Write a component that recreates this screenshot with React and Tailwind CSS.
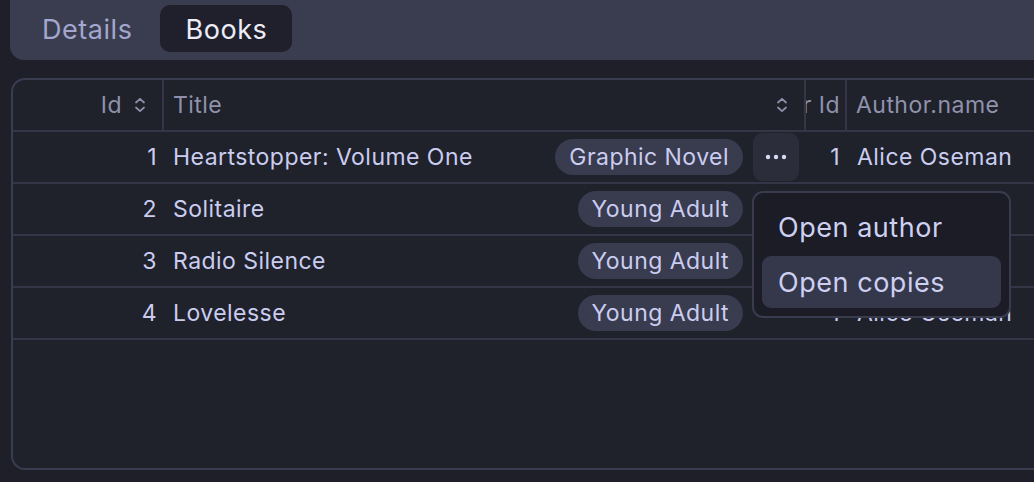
import React from "react";

const SortIcon = () => (
  <svg width="14" height="16" viewBox="0 0 14 16" fill="none" stroke="#8d8fa7" strokeWidth="1.8" strokeLinecap="round" strokeLinejoin="round">
    <path d="M3 5.5 L7 1.8 L11 5.5" />
    <path d="M3 10.5 L7 14.2 L11 10.5" />
  </svg>
);

const Dots = () => (
  <svg width="22" height="6" viewBox="0 0 22 6" fill="#d9dbf5">
    <circle cx="3" cy="3" r="2.2" />
    <circle cx="11" cy="3" r="2.2" />
    <circle cx="19" cy="3" r="2.2" />
  </svg>
);

const rows = [
  { id: 1, title: "Heartstopper: Volume One", genre: "Graphic Novel", menu: true },
  { id: 2, title: "Solitaire", genre: "Young Adult" },
  { id: 3, title: "Radio Silence", genre: "Young Adult" },
  { id: 4, title: "Lovelesse", genre: "Young Adult" },
];

export default function App() {
  return (
    <div className="relative w-[1034px] h-[482px] overflow-hidden bg-[#1e1f29] pl-[10px] font-['Inter',sans-serif]">
      {/* Tab bar */}
      <div className="h-[60px] w-[1100px] rounded-bl-[14px] bg-[#3a3c4f] flex items-start pt-[5px] pl-[7px] gap-[3px] text-[27px] tracking-[0.02em]">
        <div className="h-[47px] px-[25px] pt-[4px] flex items-center text-[#a4a7cd]">Details</div>
        <div className="h-[47px] px-[25px] pt-[4px] flex items-center rounded-[10px] bg-[#1f202b] text-[#ecedf8]">Books</div>
      </div>

      {/* Table */}
      <div className="mt-[18px] ml-[1px] w-[1100px] h-[392px] border-2 border-[#3a3c50] rounded-l-[14px] bg-[#1f212b] overflow-hidden text-[23px] tracking-[0.02em]">
        {/* Header */}
        <div className="flex h-[52px] border-b-2 border-[#343647] text-[#9092ab]">
          <div className="w-[151px] flex items-center justify-end gap-[11px] pr-[15px] border-r-2 border-[#343647]">
            <span>Id</span>
            <SortIcon />
          </div>
          <div className="w-[642px] flex items-center justify-between pl-[9px] pr-[15px] border-r-2 border-[#343647]">
            <span>Title</span>
            <SortIcon />
          </div>
          <div className="w-[41px] flex items-center justify-end pr-[5px] border-r-2 border-[#343647] overflow-hidden whitespace-nowrap">
            <span>Author Id</span>
          </div>
          <div className="flex-1 flex items-center pl-[9px]">Author.name</div>
        </div>

        {/* Rows */}
        {rows.map((r) => (
          <div key={r.id} className="flex h-[52px] border-b-2 border-[#343647] text-[#cacdf0]">
            <div className="w-[151px] flex items-center justify-end pr-[7px]">{r.id}</div>
            <div className="w-[642px] flex items-center pl-[9px] pr-[7px]">
              <span className="flex-1 whitespace-nowrap">{r.title}</span>
              <span className="h-[36px] px-[14px] flex items-center rounded-full bg-[#393b4f] whitespace-nowrap">{r.genre}</span>
              <div className="ml-[10px] w-[46px] h-[48px] flex items-center justify-center">
                {r.menu && (
                  <div className="w-[46px] h-[48px] rounded-[9px] bg-[#2b2d3a] flex items-center justify-center">
                    <Dots />
                  </div>
                )}
              </div>
            </div>
            <div className="w-[42px] flex items-center justify-end pr-[8px]">1</div>
            <div className="flex-1 flex items-center pl-[9px] whitespace-nowrap">Alice Oseman</div>
          </div>
        ))}
      </div>

      {/* Dropdown menu */}
      <div className="absolute left-[752px] top-[191px] w-[259px] rounded-[11px] border-2 border-[#393b4e] bg-[#1b1c25] p-[8px] flex flex-col gap-[3px] text-[27px] tracking-[0.02em] text-[#cdd0f2]">
        <div className="h-[52px] px-[16px] pt-[2px] flex items-center rounded-[9px] whitespace-nowrap">Open author</div>
        <div className="h-[52px] px-[16px] pt-[2px] flex items-center rounded-[9px] bg-[#35374a] whitespace-nowrap">Open copies</div>
      </div>
    </div>
  );
}
